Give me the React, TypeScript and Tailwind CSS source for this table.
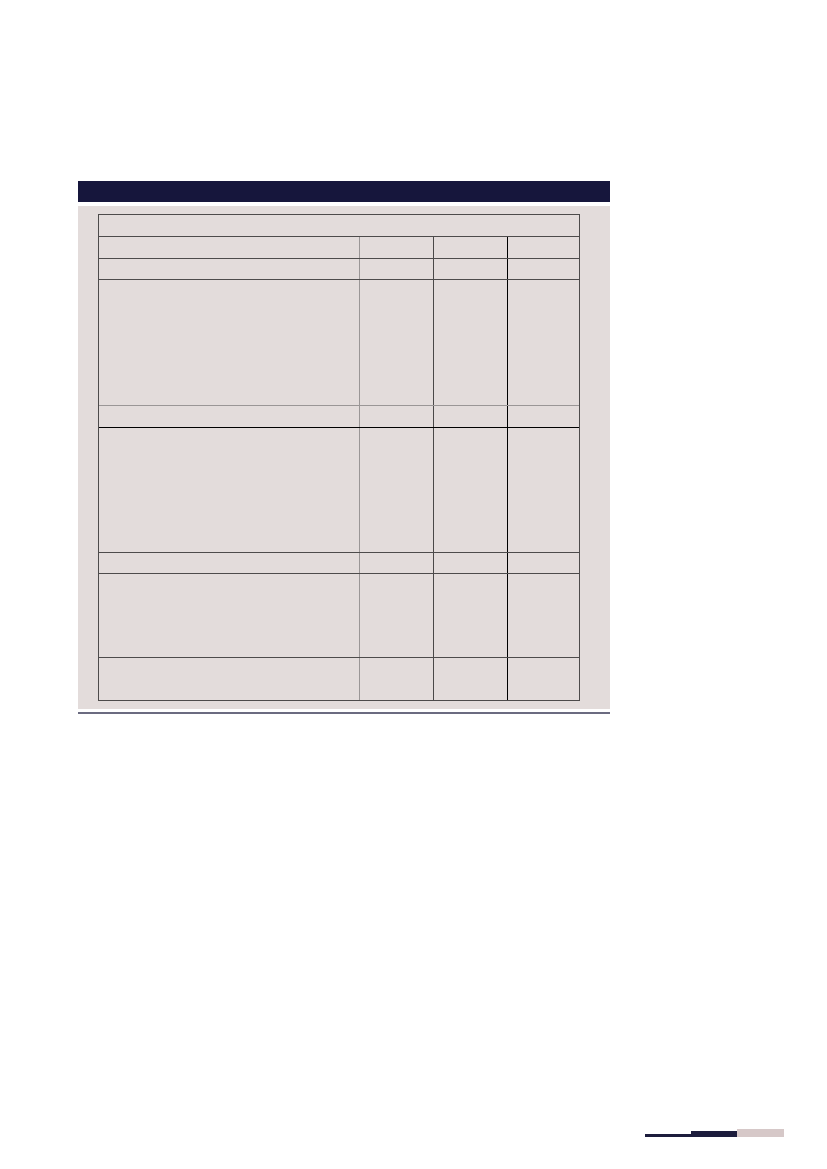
const rows = [22, 21, 126, 22, 125, 21, 84, 43];

function BodyRow({ h, topClass }: { h: number; topClass: string }) {
  return (
    <div className={`grid grid-cols-[261px_74px_74px_72px] border-t ${topClass}`} style={{ height: h }}>
      <div className="border-r border-[#9a9696]" />
      <div className="border-r border-[#4a4848]" />
      <div className="border-r border-black" />
      <div />
    </div>
  );
}

export default function App() {
  return (
    <div className="min-h-[1169px] w-[827px] bg-white font-['Liberation_Sans',sans-serif]">
      <div className="ml-[78px] w-[532px] pt-[181px]">
        <div className="h-[21px] bg-[#16163c]" />
        <div className="mt-[4px] bg-[#e3dcdb] px-[20px] pt-[8px] pb-[8px]">
          <div className="w-[482px] border border-[#4d4b4b]">
            <div className="h-[21px]" />
            {rows.map((h, i) => (
              <BodyRow
                key={i}
                h={h}
                topClass={i === 3 ? "border-[#9a9696]" : i === 4 ? "border-black" : "border-[#4d4b4b]"}
              />
            ))}
          </div>
        </div>
        <div className="mt-[3px] h-[2px] bg-[#6b6b80]" />
      </div>
      <div className="mt-[415px] flex items-end pl-[645px]">
        <div className="h-[3px] w-[46px] bg-[#1c1c3c]" />
        <div className="h-[6px] w-[46px] bg-[#1c1c3c]" />
        <div className="h-[8px] w-[47px] bg-[#d6c8c8]" />
      </div>
    </div>
  );
}
